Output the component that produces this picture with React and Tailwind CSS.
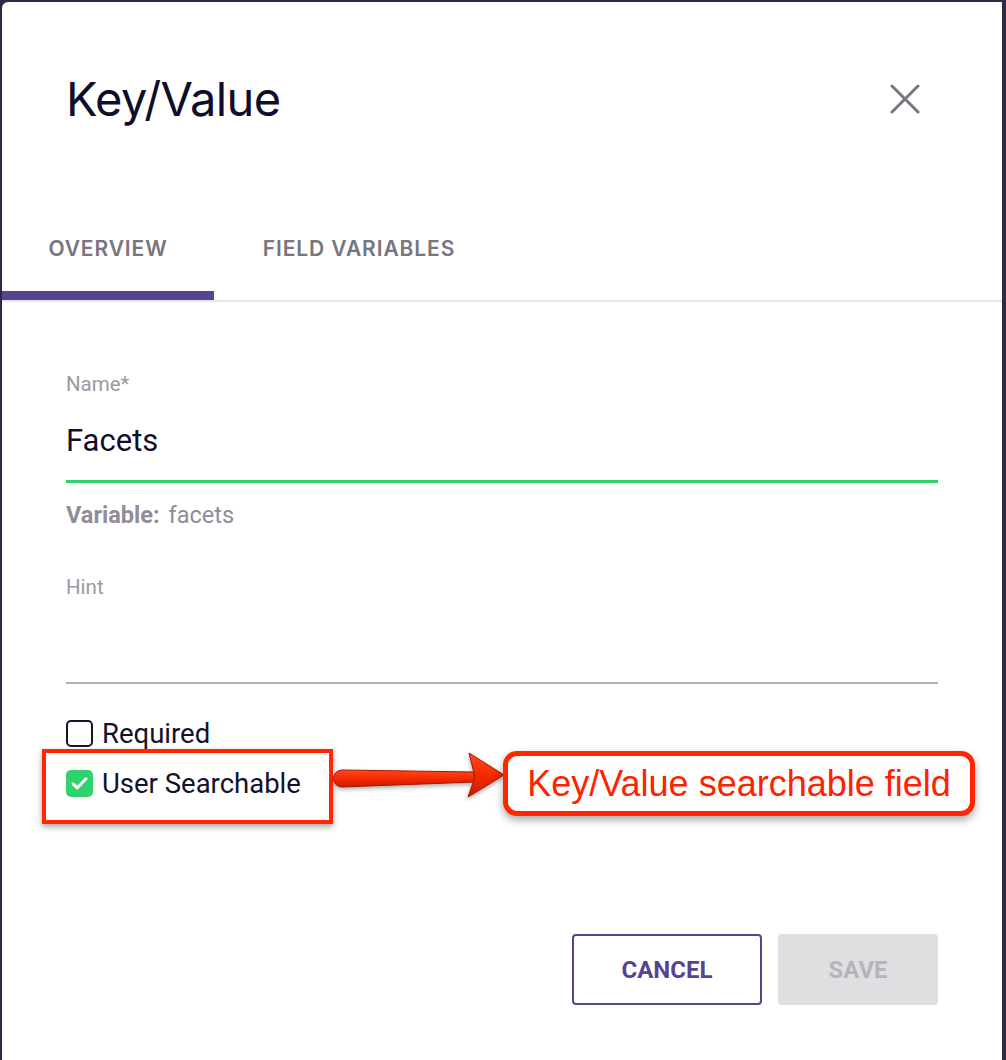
import React from "react";

const CloseIcon = () => (
    <svg width="30" height="30" viewBox="0 0 30 30" fill="none">
        <path d="M2 2 L28 28 M28 2 L2 28" stroke="#77757f" strokeWidth="3" strokeLinecap="round" />
    </svg>
);

const CheckIcon = () => (
    <svg width="21" height="21" viewBox="0 0 21 21" fill="none">
        <path d="M4 10.8 L8.4 14.8 L17 5.8" stroke="#ffffff" strokeWidth="3" strokeLinecap="round" strokeLinejoin="round" />
    </svg>
);

const Arrow = () => (
    <svg width="176" height="50" viewBox="0 0 176 50" fill="none" className="absolute left-[267px] top-[-20px] drop-shadow-[0_2px_2px_rgba(0,0,0,0.35)]">
        <defs>
            <linearGradient id="arrowFill" x1="0" y1="0" x2="0" y2="1">
                <stop offset="0" stopColor="#ff4a20" />
                <stop offset="0.5" stopColor="#f52a00" />
                <stop offset="1" stopColor="#c81c00" />
            </linearGradient>
        </defs>
        <path
            d="M9 20 L141 22 L141 32 L9 37 A8.5 8.5 0 0 1 9 20 Z"
            fill="url(#arrowFill)"
            stroke="#a81600"
            strokeWidth="1"
        />
        <path d="M136 3 L171 25 L135 47 L142 27 Z" fill="url(#arrowFill)" stroke="#a81600" strokeWidth="1" strokeLinejoin="round" />
    </svg>
);

const Tab = ({ label, active, width }) => (
    <div className={`flex flex-col ${width}`}>
        <div className="h-[88px] pt-[4px] flex items-center justify-center text-[21px] font-semibold tracking-[0.9px] text-[#77757f] font-['Inter',sans-serif]">
            {label}
        </div>
        <div className={active ? "h-[9px] bg-[#56448f]" : "h-[9px]"} />
    </div>
);

export default function App() {
    return (
        <div className="h-[1060px] bg-[#2e2a44] pt-[2px] pl-[2px] overflow-hidden">
            <div className="w-[1000px] h-[1058px] bg-white rounded-tl-[6px] font-['Roboto',sans-serif]">
                {/* Header */}
                <div className="flex items-start justify-between pl-[64px] pr-[82px] pt-[73px]">
                    <h1 className="text-[47px] leading-none text-[#100d2a] font-['Inter',sans-serif] tracking-[-0.6px]">
                        Key/Value
                    </h1>
                    <div className="mt-[9px]">
                        <CloseIcon />
                    </div>
                </div>

                {/* Tabs */}
                <div className="mt-[81px] flex border-b-2 border-[#e6e6e8]">
                    <Tab label="OVERVIEW" active width="w-[212px]" />
                    <Tab label="FIELD VARIABLES" width="w-[290px]" />
                </div>

                {/* Form */}
                <div className="px-[64px]">
                    <div className="mt-[70px] text-[20.5px] leading-[24px] text-[#9b99a3]">Name*</div>
                    <div className="mt-[27px] pb-[21px] border-b-[3px] border-[#2fd16b] text-[31px] leading-[36px] text-[#100d2a]">
                        Facets
                    </div>
                    <div className="mt-[18px] text-[23.5px] leading-[28px] text-[#8f8d97]">
                        <span className="font-bold">Variable:</span>
                        <span className="ml-[9px]">facets</span>
                    </div>

                    <div className="mt-[46px] text-[20.5px] leading-[24px] text-[#9b99a3]">Hint</div>
                    <div className="mt-[27px] h-[58px] border-b-2 border-[#b4b2b9]" />

                    {/* Checkboxes */}
                    <div className="mt-[36px] flex items-center gap-[9px] h-[27px]">
                        <div className="w-[27px] h-[27px] rounded-[5px] border-2 border-[#16132e]" />
                        <span className="text-[27.5px] text-[#14112b]">Required</span>
                    </div>
                    <div className="relative mt-[23px] flex items-center gap-[9px] h-[27px]">
                        <div className="w-[27px] h-[27px] rounded-[5px] bg-[#2fd36c] flex items-center justify-center">
                            <CheckIcon />
                        </div>
                        <span className="text-[27.5px] text-[#14112b]">User Searchable</span>

                        {/* Annotation */}
                        <div className="absolute left-[-24px] top-[-21px] w-[291px] h-[75px] border-4 border-[#ff2600] shadow-[0_3px_6px_rgba(0,0,0,0.35)]" />
                        <Arrow />
                        <div className="absolute left-[437px] top-[-19px] w-[472px] h-[65px] rounded-[14px] border-[5px] border-[#ff2600] bg-white shadow-[0_4px_8px_rgba(0,0,0,0.35)] flex items-center justify-center">
                            <span className="text-[36px] leading-none text-[#ff2200] font-['Liberation_Sans',Arial,sans-serif]">
                                Key/Value searchable field
                            </span>
                        </div>
                    </div>

                    {/* Buttons */}
                    <div className="mt-[137px] flex justify-end gap-[16px]">
                        <button className="w-[190px] h-[71px] rounded-[4px] border-2 border-[#56448f] text-[24px] font-bold text-[#56448f] bg-white">
                            CANCEL
                        </button>
                        <button className="w-[160px] h-[71px] rounded-[4px] bg-[#dfdfe1] text-[24px] font-bold text-[#b6b4bb]">
                            SAVE
                        </button>
                    </div>
                </div>
            </div>
        </div>
    );
}
